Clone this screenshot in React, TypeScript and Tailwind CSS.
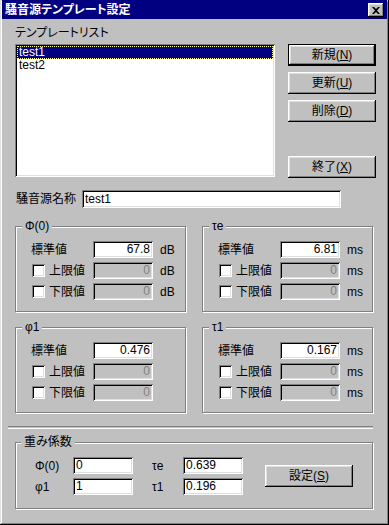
import React from "react";

const raised =
  "shadow-[inset_-1px_-1px_#000,inset_1px_1px_#fff,inset_-2px_-2px_#808080,inset_2px_2px_#dfdfdf]";
const sunken =
  "shadow-[inset_1px_1px_#808080,inset_-1px_-1px_#fff,inset_2px_2px_#000,inset_-2px_-2px_#dfdfdf]";
const etched =
  "border border-[#808080] shadow-[1px_1px_0_#fff,inset_1px_1px_0_#fff]";

function Button({
  text,
  hot,
  def,
  className = "",
}: {
  text: string;
  hot: string;
  def?: boolean;
  className?: string;
}) {
  const face = (
    <div
      className={`flex h-full w-full items-center justify-center bg-[#c0c0c0] ${raised}`}
    >
      <span>
        {text}(<span className="underline">{hot}</span>)
      </span>
    </div>
  );
  return (
    <div className={`h-[22px] w-[88px] ${def ? "border border-black" : ""} ${className}`}>
      {face}
    </div>
  );
}

function ValueRow({
  label,
  value,
  unit,
  check,
}: {
  label: string;
  value: string;
  unit?: string;
  check?: boolean;
}) {
  return (
    <div className="flex h-[17px] items-center">
      <div className="flex w-[62px] items-center">
        {check && (
          <span className={`ml-[1px] mr-[4px] h-[13px] w-[13px] bg-white ${sunken}`} />
        )}
        <span>{label}</span>
      </div>
      <div
        className={`h-[17px] w-[60px] pr-[3px] text-right leading-[17px] ${sunken} ${
          check ? "bg-[#c0c0c0] text-[#808080]" : "bg-white"
        }`}
      >
        {value}
      </div>
      {unit && <span className="ml-[7px]">{unit}</span>}
    </div>
  );
}

function Group({
  title,
  std,
  unit,
}: {
  title: string;
  std: string;
  unit?: string;
}) {
  return (
    <div className={`relative h-[86px] w-[171px] ${etched}`}>
      <span className="absolute left-[6px] top-[-8px] bg-[#c0c0c0] px-[3px]">{title}</span>
      <div className="flex flex-col gap-[4px] pl-[15px] pt-[14px]">
        <ValueRow label="標準値" value={std} unit={unit} />
        <ValueRow label="上限値" value="0" unit={unit} check />
        <ValueRow label="下限値" value="0" unit={unit} check />
      </div>
    </div>
  );
}

export default function App() {
  return (
    <div className="h-[525px] w-[389px] overflow-hidden bg-[#c0c0c0] font-['Liberation_Sans','Noto_Sans_CJK_JP',sans-serif] text-[12px] leading-[14px] text-black [font-feature-settings:'palt'] shadow-[inset_-1px_-1px_#000,inset_1px_1px_#dfdfdf,inset_-2px_-2px_#808080,inset_2px_2px_#fff]">
      {/* Title bar */}
      <div className="mx-[2px] flex h-[19px] items-center justify-between bg-[#000080] pl-[3px] pr-[3px] pt-[1px]">
        <span className="text-[12px] font-bold text-white">騒音源テンプレート設定</span>
        <div className={`flex h-[14px] w-[16px] items-center justify-center bg-[#c0c0c0] ${raised}`}>
          <svg width="8" height="7" viewBox="0 0 8 7">
            <path d="M0 0h2l2 2 2-2h2L5 3.5 8 7H6L4 5 2 7H0l3-3.5z" fill="#000" />
          </svg>
        </div>
      </div>

      <div className="pl-[15px]">
        <div className="pt-[7px]">テンプレートリスト</div>

        {/* List + buttons */}
        <div className="mt-[4px] flex">
          <div className={`h-[133px] w-[260px] bg-white p-[2px] ${sunken}`}>
            <div className="h-[13px] border border-dotted border-[#ffffa0] bg-[#000080] pl-[1px] leading-[11px] text-white">
              test1
            </div>
            <div className="h-[13px] border border-transparent pl-[1px] leading-[11px]">test2</div>
          </div>
          <div className="ml-[13px] flex flex-col">
            <Button text="新規" hot="N" def />
            <Button text="更新" hot="U" className="mt-[6px]" />
            <Button text="削除" hot="D" className="mt-[6px]" />
            <Button text="終了" hot="X" className="mt-[34px]" />
          </div>
        </div>

        {/* Name */}
        <div className="mt-[12px] flex h-[18px] items-center">
          <span className="w-[67px] pl-[1px]">騒音源名称</span>
          <div className={`h-[18px] w-[259px] bg-white pl-[3px] leading-[18px] ${sunken}`}>test1</div>
        </div>

        <div className="mt-[18px] flex gap-[16px]">
          <Group title="Φ(0)" std="67.8" unit="dB" />
          <Group title="τe" std="6.81" unit="ms" />
        </div>
        <div className="mt-[15px] flex gap-[16px]">
          <Group title="φ1" std="0.476" />
          <Group title="τ1" std="0.167" unit="ms" />
        </div>
      </div>

      {/* Separator */}
      <div className="ml-[8px] mt-[13px] h-[2px] w-[365px] border-t border-[#808080] shadow-[0_1px_0_#fff]" />

      {/* Weights */}
      <div className={`relative ml-[15px] mt-[14px] h-[67px] w-[358px] ${etched}`}>
        <span className="absolute left-[5px] top-[-8px] bg-[#c0c0c0] px-[3px]">重み係数</span>
        <div className="flex items-center pl-[19px] pt-[14px]">
          <div className="grid grid-cols-[38px_60px_50px_60px] items-center gap-y-[4px]">
            <span>Φ(0)</span>
            <div className={`h-[17px] bg-white pl-[3px] leading-[17px] ${sunken}`}>0</div>
            <span className="pl-[19px]">τe</span>
            <div className={`h-[17px] bg-white pl-[3px] leading-[17px] ${sunken}`}>0.639</div>
            <span>φ1</span>
            <div className={`h-[17px] bg-white pl-[3px] leading-[17px] ${sunken}`}>1</div>
            <span className="pl-[19px]">τ1</span>
            <div className={`h-[17px] bg-white pl-[3px] leading-[17px] ${sunken}`}>0.196</div>
          </div>
          <Button text="設定" hot="S" className="ml-[22px] h-[21px]" />
        </div>
      </div>
    </div>
  );
}
